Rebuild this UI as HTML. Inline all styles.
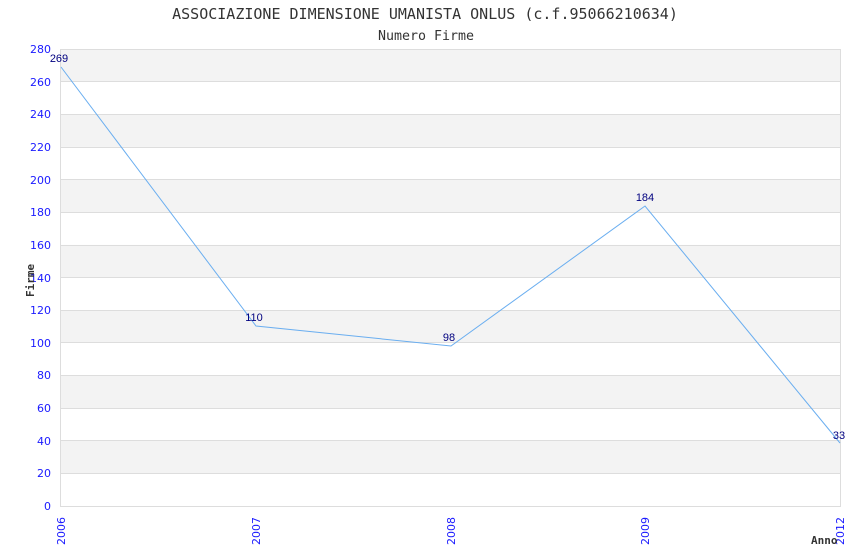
<!DOCTYPE html>
<html><head><meta charset="utf-8"><style>
html,body{margin:0;padding:0;background:#fff;width:850px;height:550px;overflow:hidden}
</style></head><body>
<svg width="850" height="550" xmlns="http://www.w3.org/2000/svg">
<text x="425" y="19" text-anchor="middle" font-family="DejaVu Sans Mono, Liberation Mono, monospace" font-size="15" fill="#333">ASSOCIAZIONE DIMENSIONE UMANISTA ONLUS (c.f.95066210634)</text>
<text x="426" y="40" text-anchor="middle" font-family="DejaVu Sans Mono, Liberation Mono, monospace" font-size="13.3" fill="#333">Numero Firme</text>
<g fill="#f3f3f3">
<rect x="61" y="49" width="779" height="32.6"/>
<rect x="61" y="114.3" width="779" height="32.6"/>
<rect x="61" y="179.6" width="779" height="32.6"/>
<rect x="61" y="244.9" width="779" height="32.6"/>
<rect x="61" y="310.1" width="779" height="32.6"/>
<rect x="61" y="375.4" width="779" height="32.6"/>
<rect x="61" y="440.7" width="779" height="32.6"/>
</g>
<g stroke="#ddd" stroke-width="1">
<line x1="61" y1="49.5" x2="840" y2="49.5"/><line x1="61" y1="81.5" x2="840" y2="81.5"/>
<line x1="61" y1="114.5" x2="840" y2="114.5"/><line x1="61" y1="147.5" x2="840" y2="147.5"/>
<line x1="61" y1="179.5" x2="840" y2="179.5"/><line x1="61" y1="212.5" x2="840" y2="212.5"/>
<line x1="61" y1="245.5" x2="840" y2="245.5"/><line x1="61" y1="277.5" x2="840" y2="277.5"/>
<line x1="61" y1="310.5" x2="840" y2="310.5"/><line x1="61" y1="342.5" x2="840" y2="342.5"/>
<line x1="61" y1="375.5" x2="840" y2="375.5"/><line x1="61" y1="408.5" x2="840" y2="408.5"/>
<line x1="61" y1="440.5" x2="840" y2="440.5"/><line x1="61" y1="473.5" x2="840" y2="473.5"/>
<line x1="60.5" y1="49" x2="60.5" y2="506.5"/><line x1="840.5" y1="49" x2="840.5" y2="506.5"/>
<line x1="60" y1="506.5" x2="841" y2="506.5"/>
</g>
<g font-family="DejaVu Sans, Liberation Sans, sans-serif" font-size="11" fill="#1a1aff" text-anchor="end">
<text x="51" y="53">280</text><text x="51" y="86">260</text><text x="51" y="118">240</text>
<text x="51" y="151">220</text><text x="51" y="184">200</text><text x="51" y="216">180</text>
<text x="51" y="249">160</text><text x="51" y="282">140</text><text x="51" y="314">120</text>
<text x="51" y="347">100</text><text x="51" y="379">80</text><text x="51" y="412">60</text>
<text x="51" y="445">40</text><text x="51" y="477">20</text><text x="51" y="510">0</text>
</g>
<g font-family="DejaVu Sans, Liberation Sans, sans-serif" font-size="11" fill="#1a1aff">
<text transform="translate(65,545) rotate(-90)">2006</text>
<text transform="translate(260,545) rotate(-90)">2007</text>
<text transform="translate(455,545) rotate(-90)">2008</text>
<text transform="translate(649,545) rotate(-90)">2009</text>
<text transform="translate(844,545) rotate(-90)">2012</text>
</g>
<text transform="translate(34,297) rotate(-90)" font-family="DejaVu Sans Mono, monospace" font-size="11" font-weight="bold" fill="#333">Firme</text>
<text x="811" y="544" font-family="DejaVu Sans Mono, monospace" font-size="11" font-weight="bold" fill="#333">Anno</text>
<polyline points="61,67 256,326 451,346 645,206 840,443" fill="none" stroke="#6aaef0" stroke-width="1"/>
<g font-family="Liberation Sans, sans-serif" font-size="11" fill="#000080" text-anchor="middle">
<text x="59" y="62">269</text><text x="254" y="321">110</text><text x="449" y="341">98</text>
<text x="645" y="201">184</text><text x="839" y="439">33</text>
</g>
</svg>
</body></html>
